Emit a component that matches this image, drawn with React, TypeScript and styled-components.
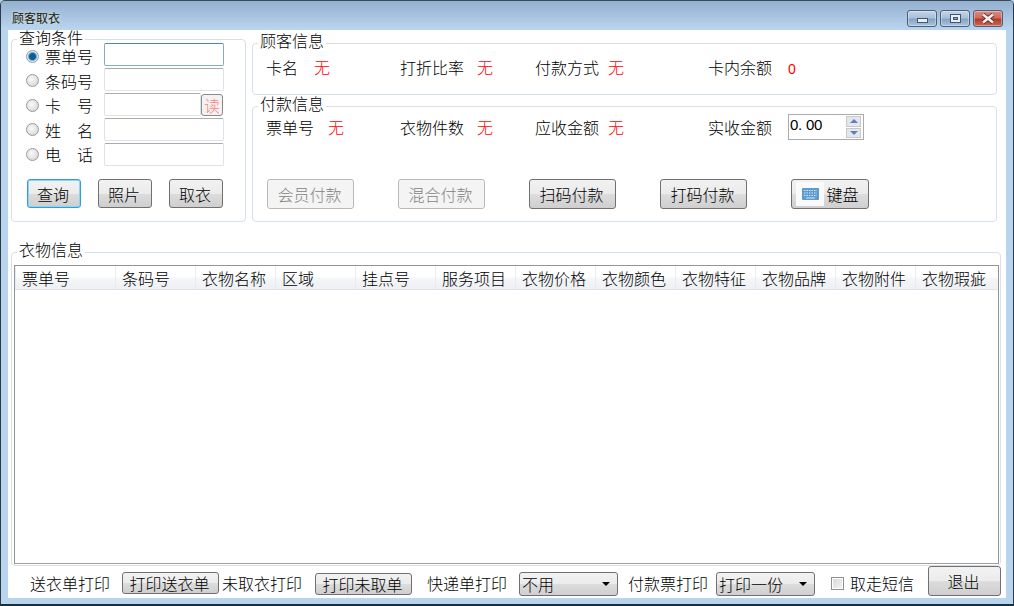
import React from "react";
import styled, { createGlobalStyle, css } from "styled-components";

const Global = createGlobalStyle`
  html, body { margin: 0; padding: 0; background: #b9d4ee; }
  * { box-sizing: border-box; }
  body { font-family: "Noto Sans CJK SC", "Liberation Sans", sans-serif; font-weight: 300; font-size: 16px; color: #000; }
`;

const Win = styled.div`
  width: 1014px; height: 606px; display: flex; flex-direction: column; overflow: hidden;
  background: #b9d4ee;
  border-top: 1px solid #3a4a55; border-left: 1px solid #2b3a45; border-right: 1px solid #2b3a45;
  border-bottom: 2px solid #14313f;
  border-radius: 5px 5px 0 0;
`;
const TitleBar = styled.div`
  height: 29px; flex: none; display: flex; align-items: flex-start; justify-content: space-between;
  padding: 0 9px 0 11px;
  background: linear-gradient(#94b0cf, #bad5ef);
`;
const TitleText = styled.div`
  font-size: 12px; line-height: 14px; margin-top: 10px; color: #201a00; font-weight: 400;
  text-shadow: 0 0 4px #dfeaf5;
`;
const Caps = styled.div` display: flex; gap: 3px; margin-top: 9px; margin-right: 1px; `;
const Cap = styled.div<{ $close?: boolean }>`
  width: 30px; height: 17px; border: 1px solid #4d5f76; border-radius: 3px; display: flex; align-items: center; justify-content: center;
  box-shadow: inset 0 0 0 1px rgba(255,255,255,.35);
  background: ${p => p.$close
    ? "linear-gradient(#d98d82 0%, #cf6a5e 45%, #b23a2b 55%, #c66a55 100%)"
    : "linear-gradient(#c2d4e8 0%, #a9c0da 45%, #86a3c3 55%, #a9c5e0 100%)"};
`;
const MinGlyph = styled.svg` margin-top: 4px; `;
const Client = styled.div`
  flex: 1; margin: 0 7px 6px 7px; background: #fff; display: flex; flex-direction: column; padding: 9px 0 0 3px;
`;
const Top = styled.div` display: flex; gap: 6px; height: 183px; `;
const Group = styled.div<{ $w?: number; $h: number; $mt?: number }>`
  position: relative; border: 1px solid #d6e0e8; border-radius: 4px;
  ${p => p.$w ? css`width: ${p.$w}px;` : ""} height: ${p => p.$h}px; margin-top: ${p => p.$mt ?? 0}px; flex: none;
`;
const Legend = styled.div<{ $top?: number }>`
  position: absolute; left: 5px; top: ${p => p.$top ?? -11}px; background: #fff; padding: 0 2px; line-height: 15px; height: 15px; font-size: 16px;
`;
const QueryForm = styled.div`
  display: flex; padding: 3px 0 0 14px; height: 127px;
`;
const RadioList = styled.div`
  width: 78px; flex: none; display: flex; flex-direction: column; gap: 2.5px; padding-top: 2px;
`;
const RadioRow = styled.div` display: flex; align-items: center; gap: 6px; height: 22px; `;
const InputList = styled.div` display: flex; flex-direction: column; gap: 2px; `;
const Radio = styled.span<{ $on?: boolean }>`
  width: 13px; height: 13px; flex: none; border-radius: 50%; border: 1px solid #9a9a9a;
  background: ${p => p.$on ? "radial-gradient(circle, #0b5f9e 0 3px, #6fa9d0 4px, #e8e8e8 5px)" : "radial-gradient(circle at 40% 40%, #fafafa, #cfcfcf)"};
`;
const RLabel = styled.span` line-height: 16px; white-space: pre; `;
const InputWrap = styled.div` display: flex; align-items: center; `;
const TextBox = styled.input<{ $focus?: boolean; $short?: boolean }>`
  width: ${p => p.$short ? 97 : 120}px; height: 23px; padding: 0; outline: none; border-radius: 2px; background: #fff;
  border: 1px solid ${p => p.$focus ? "#86aacb" : "#dde3ec"};
  border-top-color: ${p => p.$focus ? "#4f83b0" : "#ababab"};
`;
const ReadBtn = styled.button`
  width: 22px; height: 22px; padding: 0; border: 1px solid #8a8a8a; border-radius: 3px; background: #f2f2f2; color: #ff7f7f;
  font: 300 16px/18px "Noto Sans CJK SC", sans-serif;
`;
const Btn = styled.button<{ $w: number; $h?: number; $off?: boolean; $focus?: boolean; $ml?: number; $mt?: number }>`
  width: ${p => p.$w}px; height: ${p => p.$h ?? 30}px; margin-left: ${p => p.$ml ?? 0}px; margin-top: ${p => p.$mt ?? 0}px; flex: none; padding: 0 2px 0 0;
  font: 300 16px/18px "Noto Sans CJK SC", sans-serif;
  border-radius: 3px; border: 1px solid ${p => p.$off ? "#b8b8b8" : p.$focus ? "#2f9fd8" : "#707070"};
  color: ${p => p.$off ? "#838383" : "#000"};
  background: ${p => p.$off ? "#f4f4f4" : "linear-gradient(#f2f2f2 0%, #ebebeb 50%, #dcdcdc 52%, #cfcfcf 100%)"};
  ${p => p.$focus && css`box-shadow: inset 0 0 0 1px #8fd3f4;`}
  display: inline-flex; align-items: center; justify-content: center;
`;
const QueryBtns = styled.div` display: flex; gap: 17px; padding: 12px 0 0 15px; `;
const Col = styled.div` display: flex; flex-direction: column; gap: 11px; width: 745px; `;
const Row = styled.div<{ $pt: number }>` display: flex; align-items: flex-start; padding: ${p => p.$pt}px 0 0 13px; height: 46px; `;
const Cell = styled.span<{ $w: number }>` width: ${p => p.$w}px; flex: none; line-height: 22px; white-space: pre; `;
const Red = styled.span<{ $w: number }>` width: ${p => p.$w}px; flex: none; line-height: 22px; color: #f00; `;
const RedNum = styled(Red)` font-size: 14px; font-family: "Liberation Sans", sans-serif; font-weight: 400; margin-top: 2px; `;
const Spin = styled.div`
  width: 76px; height: 26px; margin-top: -2px; border: 1px solid #ababab; display: flex; justify-content: space-between; padding: 0 1px 1px 1px;
  font-size: 15px; line-height: 19px; font-family: "Liberation Sans", sans-serif; font-weight: 400; letter-spacing: -.3px;
`;
const SpinDot = styled.span` margin-right: 4px; `;
const SpinBtns = styled.div` display: flex; flex-direction: column; gap: 1px; width: 15px; margin: 1px 1px 0 0; `;
const SpinBtn = styled.div`
  flex: 1; background: #e6e6ee; border: 1px solid #c8c8c8; display: flex; align-items: center; justify-content: center;
`;
const Tri = styled.i<{ $up?: boolean; $c?: string }>`
  width: 0; height: 0; border-left: 4px solid transparent; border-right: 4px solid transparent;
  ${p => p.$up ? css`border-bottom: 4px solid ${p.$c ?? "#5f7fc0"};` : css`border-top: 4px solid ${p.$c ?? "#5f7fc0"};`}
`;
const PayBtns = styled.div` display: flex; gap: 44px; padding: 26px 0 0 14px; `;
const KeyIcon = styled.span`
  width: 28px; height: 24px; background: #fafafa; display: flex; align-items: center; justify-content: center; margin-right: 2px; margin-left: -3px;
`;
const ClothGroup = styled(Group)` margin-top: 30px; width: 990px; `;
const ListBox = styled.div`
  position: absolute; left: 2px; top: 12px; width: 985px; height: 299px; border: 1px solid #8e969c; border-bottom-color: #a0a0a0; background: #fff;
`;
const Header = styled.div`
  display: flex; height: 24px; background: linear-gradient(#fff 0%, #fff 45%, #f4f6f8 55%, #eef0f3 100%); border-bottom: 1px solid #dfe3e8;
`;
const HCell = styled.div<{ $w: number }>`
  width: ${p => p.$w}px; flex: none; padding-left: 6px; line-height: 24px; border-left: 1px solid #e8ebef; white-space: nowrap;
`;
const Bottom = styled.div`
  display: flex; align-items: center; padding: 0 0 0 19px; height: 30px;
`;
const BText = styled.span<{ $ml?: number }>` margin-left: ${p => p.$ml ?? 0}px; line-height: 22px; white-space: nowrap; flex: none; margin-top: 4px; `;
const Combo = styled.div<{ $ml: number }>`
  width: 99px; height: 24px; margin-left: ${p => p.$ml}px; margin-top: 6px; flex: none; border: 1px solid #707070; border-radius: 3px; padding: 0 7px 0 2px;
  background: linear-gradient(#f2f2f2 0%, #ebebeb 50%, #dcdcdc 52%, #cfcfcf 100%);
  display: flex; align-items: center; justify-content: space-between; line-height: 22px;
`;
const Check = styled.span<{ $ml: number }>`
  width: 13px; height: 13px; margin-left: ${p => p.$ml}px; margin-top: 4px; flex: none; border: 1px solid #8e8f8f;
  background: linear-gradient(135deg, #d8d8d8, #f2f2f2); box-shadow: inset 0 0 0 1px #fff;
`;

const cols: [string, number][] = [["票单号",100],["条码号",80],["衣物名称",80],["区域",80],["挂点号",80],["服务项目",80],["衣物价格",80],["衣物颜色",80],["衣物特征",80],["衣物品牌",80],["衣物附件",80],["衣物瑕疵",65]];
const query: [string, boolean][] = [["票单号",true],["条码号",false],["卡　号",false],["姓　名",false],["电　话",false]];

export default function App() {
  return (
    <Win>
      <Global />
      <TitleBar>
        <TitleText>顾客取衣</TitleText>
        <Caps>
          <Cap><MinGlyph width="11" height="5"><rect x=".5" y=".5" width="10" height="4" fill="#e8eef5" stroke="#44566c"/></MinGlyph></Cap>
          <Cap><svg width="11" height="9"><rect x=".5" y=".5" width="10" height="8" fill="#e8eef5" stroke="#44566c"/><rect x="3.5" y="3.5" width="4" height="2" fill="#8aa5c3" stroke="#44566c"/></svg></Cap>
          <Cap $close><svg width="14" height="11"><path d="M2 1.5 L12 9.5 M12 1.5 L2 9.5" stroke="#5b2a25" strokeWidth="4.2"/><path d="M2 1.5 L12 9.5 M12 1.5 L2 9.5" stroke="#f4eeee" strokeWidth="2.6"/></svg></Cap>
        </Caps>
      </TitleBar>
      <Client>
        <Top>
          <Group $w={235} $h={183}>
            <Legend $top={-10}>查询条件</Legend>
            <QueryForm>
              <RadioList>
                {query.map(([label, on]) => (
                  <RadioRow key={label}>
                    <Radio $on={on} />
                    <RLabel>{label}</RLabel>
                  </RadioRow>
                ))}
              </RadioList>
              <InputList>
                {query.map(([label, on], i) => (
                  <InputWrap key={label}>
                    <TextBox $focus={on} $short={i === 2} />
                    {i === 2 && <ReadBtn>读</ReadBtn>}
                  </InputWrap>
                ))}
              </InputList>
            </QueryForm>
            <QueryBtns>
              <Btn $w={54} $h={29} $focus>查询</Btn>
              <Btn $w={54} $h={29}>照片</Btn>
              <Btn $w={54} $h={29}>取衣</Btn>
            </QueryBtns>
          </Group>
          <Col>
            <Group $h={52} $mt={4}>
              <Legend>顾客信息</Legend>
              <Row $pt={12}>
                <Cell $w={48}>卡名</Cell><Red $w={86}>无</Red>
                <Cell $w={77}>打折比率</Cell><Red $w={58}>无</Red>
                <Cell $w={73}>付款方式</Cell><Red $w={100}>无</Red>
                <Cell $w={80}>卡内余额</Cell><RedNum $w={20}>0</RedNum>
              </Row>
            </Group>
            <Group $h={116}>
              <Legend>付款信息</Legend>
              <Row $pt={9}>
                <Cell $w={62}>票单号</Cell><Red $w={72}>无</Red>
                <Cell $w={77}>衣物件数</Cell><Red $w={58}>无</Red>
                <Cell $w={73}>应收金额</Cell><Red $w={100}>无</Red>
                <Cell $w={80}>实收金额</Cell>
                <Spin>
                  <span>0<SpinDot>.</SpinDot>00</span>
                  <SpinBtns>
                    <SpinBtn><Tri $up /></SpinBtn>
                    <SpinBtn><Tri /></SpinBtn>
                  </SpinBtns>
                </Spin>
              </Row>
              <PayBtns>
                <Btn $w={87} $off>会员付款</Btn>
                <Btn $w={87} $off>混合付款</Btn>
                <Btn $w={87}>扫码付款</Btn>
                <Btn $w={87}>打码付款</Btn>
                <Btn $w={78}>
                  <KeyIcon>
                    <svg width="17" height="12" viewBox="0 0 17 12">
                      <rect width="17" height="12" rx="1" fill="#5b9bd0" />
                      <path d="M2 2.5h13M2 5h13M2 7.5h13" stroke="#d6e8f6" strokeWidth="1" strokeDasharray="1.5 1" />
                      <path d="M4 10h9" stroke="#d6e8f6" strokeWidth="1" />
                    </svg>
                  </KeyIcon>
                  键盘
                </Btn>
              </PayBtns>
            </Group>
          </Col>
        </Top>
        <ClothGroup $h={314}>
          <Legend>衣物信息</Legend>
          <ListBox>
            <Header>
              {cols.map(([c, w]) => <HCell key={c} $w={w}>{c}</HCell>)}
            </Header>
          </ListBox>
        </ClothGroup>
        <Bottom>
          <BText>送衣单打印</BText>
          <Btn $w={97} $h={22} $ml={12} $mt={4}>打印送衣单</Btn>
          <BText $ml={3}>未取衣打印</BText>
          <Btn $w={97} $h={22} $ml={13} $mt={6}>打印未取单</Btn>
          <BText $ml={15}>快递单打印</BText>
          <Combo $ml={12}>不用<Tri $c="#000" /></Combo>
          <BText $ml={10}>付款票打印</BText>
          <Combo $ml={8}>打印一份<Tri $c="#000" /></Combo>
          <Check $ml={16} />
          <BText $ml={6}>取走短信</BText>
          <Btn $w={73} $h={30} $ml={14}>退出</Btn>
        </Bottom>
      </Client>
    </Win>
  );
}
